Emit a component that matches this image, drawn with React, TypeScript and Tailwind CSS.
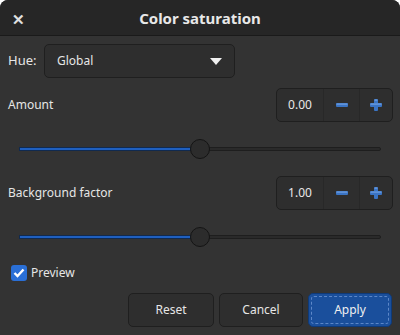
import React from "react";

function Spin({ value }: { value: string }) {
  return (
    <div className="flex h-[34px] w-[117px] rounded-[5px] border border-[#1f1f1f] bg-[#2e2e2e]">
      <div className="flex w-[46px] items-center justify-center text-[12px] text-[#e8e8e8]">{value}</div>
      <div className="flex w-[36px] items-center justify-center border-l border-[#282828]">
        <svg width="12" height="4" viewBox="0 0 12 4">
          <rect x="0" y="0" width="12" height="4" rx="1" fill="#3a74c4" />
          <rect x="0.5" y="0.5" width="11" height="1.2" fill="#6f9fe0" />
        </svg>
      </div>
      <div className="flex flex-1 items-center justify-center border-l border-[#282828]">
        <svg width="12" height="12" viewBox="0 0 12 12">
          <rect x="0" y="4" width="12" height="4" rx="1" fill="#3a74c4" />
          <rect x="4" y="0" width="4" height="12" rx="1" fill="#3a74c4" />
          <rect x="4.5" y="0.5" width="3" height="1.2" fill="#6f9fe0" />
          <rect x="0.5" y="4.5" width="11" height="1.2" fill="#6f9fe0" />
        </svg>
      </div>
    </div>
  );
}

function Slider({ pct }: { pct: number }) {
  return (
    <div className="relative mx-[19px] h-[22px]">
      <div className="absolute left-0 right-0 top-[9px] h-[4px] rounded-full border border-[#1e1e1e] bg-[#2a2a2a]" />
      <div
        className="absolute left-0 top-[9px] h-[4px] border border-[#102a50] bg-[#1f5fbf]"
        style={{ width: `${pct}%` }}
      />
      <div
        className="absolute top-[1px] h-[20px] w-[20px] -translate-x-1/2 rounded-full border border-[#141414] bg-[#2c2c2c]"
        style={{ left: `${pct}%` }}
      />
    </div>
  );
}

export default function App() {
  return (
    <div className="h-[335px] w-[400px] bg-white" style={{ fontFamily: '"Noto Sans", sans-serif' }}>
      <div className="flex h-full flex-col overflow-hidden rounded-t-[8px] bg-[#333333] text-[12px] text-[#e6e6e6]">
        <div className="relative flex h-[36px] items-center justify-center border-b border-[#1a1a1a] bg-[#262626]">
          <span className="absolute left-[12px] top-[8px] text-[15px] font-bold text-[#e0e0e0]">✕</span>
          <span className="pt-[1px] text-[15px] font-bold text-[#e8e8e8]">Color saturation</span>
        </div>

        <div className="flex items-center pl-[8px] pt-[8px]">
          <span className="w-[36px] text-[13px]">Hue:</span>
          <div className="flex h-[34px] w-[191px] items-center justify-between rounded-[5px] border border-[#1f1f1f] bg-[#2e2e2e] pl-[12px] pr-[12px]">
            <span className="text-[12px]">Global</span>
            <svg width="12" height="7" viewBox="0 0 12 7">
              <path d="M0 0 L12 0 L6 7 Z" fill="#f0f0f0" />
            </svg>
          </div>
        </div>

        <div className="flex items-center justify-between pl-[8px] pr-[7px] pt-[10px]">
          <span>Amount</span>
          <Spin value="0.00" />
        </div>
        <div className="pt-[16px]">
          <Slider pct={50} />
        </div>

        <div className="flex items-center justify-between pl-[8px] pr-[7px] pt-[16px]">
          <span>Background factor</span>
          <Spin value="1.00" />
        </div>
        <div className="pt-[16px]">
          <Slider pct={50} />
        </div>

        <div className="flex items-center gap-[4px] pl-[11px] pt-[16px]">
          <div className="flex h-[16px] w-[16px] items-center justify-center rounded-[3px] bg-[#2a6fd6]">
            <svg width="12" height="10" viewBox="0 0 12 10">
              <path d="M1.5 5 L4.5 8 L10.5 1.5" stroke="#ffffff" strokeWidth="2.4" fill="none" />
            </svg>
          </div>
          <span>Preview</span>
        </div>

        <div className="flex justify-end gap-[5px] pr-[8px] pt-[11px]">
          <button className="h-[34px] w-[86px] rounded-[5px] border border-[#1f1f1f] bg-[#2e2e2e] text-[12px] text-[#e6e6e6]">
            Reset
          </button>
          <button className="h-[34px] w-[84px] rounded-[5px] border border-[#1f1f1f] bg-[#2e2e2e] text-[12px] text-[#e6e6e6]">
            Cancel
          </button>
          <button className="h-[34px] w-[84px] rounded-[5px] border border-[#0f3a78] bg-[#1a4f9c] p-[2px] text-[12px] text-[#f0f0f0]">
            <div className="flex h-full w-full items-center justify-center rounded-[3px] border border-dashed border-[#5c87c8]">
              Apply
            </div>
          </button>
        </div>
      </div>
    </div>
  );
}
